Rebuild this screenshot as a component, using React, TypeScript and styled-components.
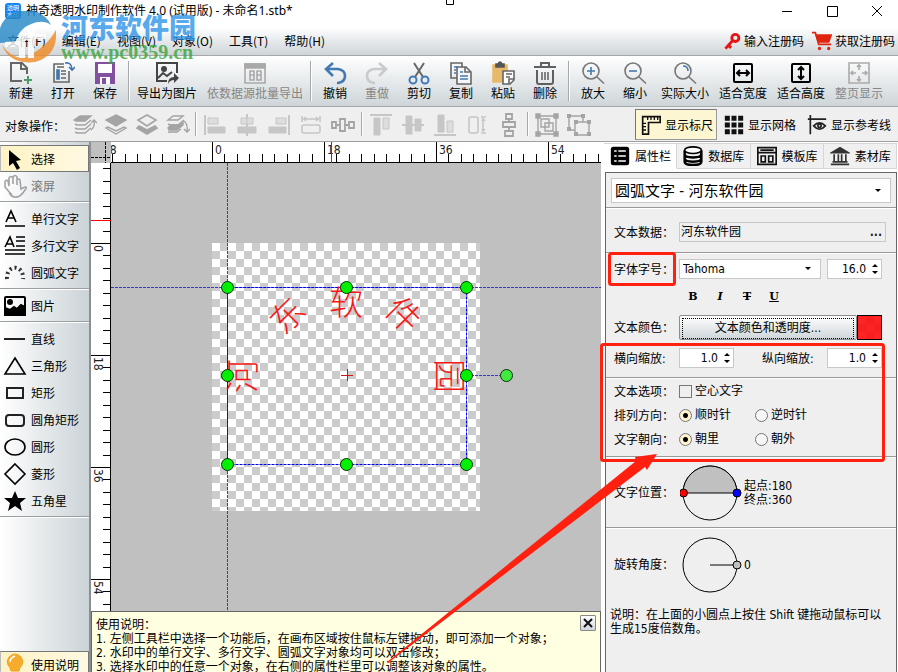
import React, { useLayoutEffect, useRef, useState } from "react";
import styled, { createGlobalStyle, css } from "styled-components";

const UI_FONT = `"Noto Sans CJK SC", "Noto Sans", sans-serif`;
const PANEL_FONT = `"DejaVu Sans Condensed", "Noto Sans CJK SC", sans-serif`;
const BAR_GRADIENT = "linear-gradient(to bottom, #ffffff, #ced5d8)";
const RED = "#ff2010";

const GlobalStyle = createGlobalStyle`
  *, *::before, *::after { box-sizing: border-box; }
  body { margin: 0; font: 12px/14px ${UI_FONT}; color: #000; }
  button, input, select { font: inherit; color: inherit; }
  button { border: 0; background: none; padding: 0; white-space: nowrap; }
  svg { display: block; flex: none; }
`;

const Window = styled.div`
  position: relative;
  display: flex;
  flex-direction: column;
  height: 100vh;
  overflow: hidden;
  background: #fff;
`;

/* ---------- title and menu ---------- */

const TitleBar = styled.header`
  display: flex;
  align-items: center;
  flex: none;
  height: 27px;
  padding: 0 13px 6px 5px;
  gap: 5px;
`;

const AppBadge = styled.span`
  display: grid;
  place-items: center;
  width: 16px;
  height: 16px;
  border-radius: 3px;
  background: #1385f5;
  color: #fff;
  font-size: 6px;
  line-height: 7px;
`;

const Title = styled.h1`
  flex: 1;
  margin: 0;
  font: 400 12px/14px "Noto Sans", "Noto Sans CJK SC", sans-serif;
`;

const WindowButtons = styled.div`
  display: flex;
  gap: 29px;
`;

const MenuBar = styled.nav`
  display: flex;
  align-items: center;
  flex: none;
  gap: 16px;
  height: 29px;
  padding: 0 3px 0 7px;
  border-bottom: 1px solid #a6a9ab;
  background: ${BAR_GRADIENT};
`;

const MenuLink = styled.button`
  display: flex;
  align-items: center;
  gap: 3px;
`;

const MenuRight = styled.div`
  display: flex;
  gap: 8px;
  margin-left: auto;
`;

/* ---------- main toolbar ---------- */

const ToolBar = styled.div`
  display: flex;
  flex: none;
  height: 51px;
  border-bottom: 1px solid #a6a9ab;
  background: ${BAR_GRADIENT};
`;

const ToolButton = styled.button`
  display: flex;
  flex-direction: column;
  align-items: center;
  flex: none;
  min-width: 42px;
  padding: 5px 5px 0;
  line-height: 16px;
  &:disabled { color: #868686; }
`;

const Divider = styled.span`
  flex: none;
  width: 2px;
  margin: 5px 2px;
  border-left: 1px solid #a6a9ab;
  border-right: 1px solid #fff;
`;

/* ---------- object bar ---------- */

const ObjectBar = styled.div`
  display: flex;
  align-items: stretch;
  flex: none;
  height: 35px;
  padding: 0 3px 0 5px;
  border-bottom: 1px solid #a0a0a0;
  background: #efefef;
`;

const BarLabel = styled.span`
  align-self: center;
  width: 64px;
  padding-top: 3px;
`;

const OpButton = styled.button<{ $narrow?: boolean }>`
  display: grid;
  place-items: center;
  flex: none;
  width: ${(p) => (p.$narrow ? 31 : 32)}px;
  padding-top: 2px;
`;

const ViewToggles = styled.div`
  display: flex;
  align-items: center;
  gap: 1px;
  margin-left: auto;
  padding-top: 1px;
`;

const ViewToggle = styled.button<{ $on?: boolean }>`
  display: flex;
  align-items: center;
  gap: 4px;
  height: 31px;
  padding: 0 3px 0 5px;
  border: 1px solid transparent;
  ${(p) =>
    p.$on &&
    css`
      border-color: #777 #999 #999 #777;
      background: #fdf6d2;
    `}
`;

/* ---------- body ---------- */

const Body = styled.main`
  display: flex;
  flex: 1;
  min-height: 0;
`;

const SideBar = styled.aside`
  display: flex;
  flex-direction: column;
  flex: none;
  width: 91px;
  padding-top: 3px;
  border-right: 2px solid #8a8f92;
  background: linear-gradient(to right, #ffffff, #cbd3d7);
`;

const SideButton = styled.button<{ $on?: boolean }>`
  display: flex;
  align-items: center;
  flex: none;
  gap: 4px;
  height: 27px;
  padding-left: 2px;
  border: 1px solid transparent;
  text-align: left;
  &:disabled { color: #777; }
  ${(p) =>
    p.$on &&
    css`
      border-color: #777;
      border-left-color: #bbb;
      background: linear-gradient(to right, #fdf3c4, #fff9e2);
    `}
`;

const SideRule = styled.span`
  flex: none;
  height: 2px;
  margin: 2px 0;
  border-top: 1px solid #9b9fa2;
  border-bottom: 1px solid #fff;
`;

const SideFooter = styled.div`
  display: grid;
  flex: none;
  height: 21px;
  margin-top: auto;
  overflow: hidden;
`;

const Work = styled.section`
  display: flex;
  flex-direction: column;
  flex: 1;
  min-width: 0;
`;

const RulerGrid = styled.div`
  display: grid;
  grid-template: 21px minmax(0, 1fr) / 20px minmax(0, 1fr);
  flex: 1;
  min-height: 0;
`;

const RulerArea = styled.div<{ $tone: string }>`
  overflow: hidden;
  background: ${(p) => p.$tone};
`;

const FillSvg = styled.svg`
  width: 100%;
  height: 100%;
`;

const Tips = styled.section`
  display: flex;
  align-items: flex-start;
  justify-content: space-between;
  flex: 0 0 61px;
  overflow: hidden;
  padding: 3px 4px 0;
  border: 1px solid #666;
  border-bottom: 0;
  background: #ffffe1;
  font-family: ${PANEL_FONT};
`;

const TipText = styled.div`
  padding-top: 3px;
  white-space: nowrap;
`;

const TipHeading = styled.p`
  margin: 0;
`;

const TipList = styled.ol`
  margin: 0;
  padding: 0;
  list-style: none;
`;

const CloseTip = styled.button`
  display: grid;
  place-items: center;
  width: 16px;
  height: 16px;
  border: 1px solid #888;
  border-radius: 1px;
  background: linear-gradient(to bottom, #fff, #d0d7da);
`;

/* ---------- property panel ---------- */

const Panel = styled.aside`
  display: flex;
  flex-direction: column;
  flex: none;
  width: 297px;
  padding: 1px 1px 0 3px;
  background: #fff;
`;

const Tabs = styled.div`
  display: flex;
  margin-bottom: 3px;
  flex: none;
  height: 26px;
`;

const Tab = styled.button<{ $on?: boolean }>`
  display: flex;
  align-items: center;
  flex: 1 1 0;
  gap: 5px;
  padding: 0 4px 0 6px;
  border: 1px solid #d6d6d6;
  border-left: 0;
  background: ${(p) => (p.$on ? "#fff" : "#f0f0f0")};
  ${(p) => p.$on && "border-bottom-color: #fff;"}
`;

const PanelBox = styled.div`
  flex: 1;
  margin-left: 1px;
  border: 1px solid #666;
  border-bottom: 0;
  background: #efefef;
  font-family: ${PANEL_FONT};
`;

const Section = styled.section<{ $pad: string }>`
  padding: ${(p) => p.$pad};
  border-bottom: 1px solid #999;
  box-shadow: 0 1px 0 #fff;
  & + & { padding-top: 1px; }
`;

const Row = styled.div<{ $h: number; $top?: number; $gap?: number }>`
  display: flex;
  align-items: center;
  gap: ${(p) => p.$gap ?? 0}px;
  height: ${(p) => p.$h}px;
  margin-top: ${(p) => p.$top ?? 0}px;
`;

const AngleRow = styled(Row)`
  padding: 0 8px;
`;

const FontFields = styled.div`
  display: flex;
  flex: 1;
  gap: 6px;
`;

const ScaleFields = styled.div`
  display: flex;
  align-items: center;
  justify-content: space-between;
  flex: 1;
`;

const FieldLabel = styled.label`
  flex: none;
  width: 65px;
  padding-top: 1px;
`;

const FieldName = styled.span`
  flex: none;
  width: 65px;
  padding-top: 1px;
`;

const SelectWrap = styled.div<{ $big?: boolean }>`
  display: grid;
  grid-template-columns: 1fr 16px;
  align-items: center;
  flex: 1;
  height: ${(p) => (p.$big ? 25 : 20)}px;
  border: 1px solid #c8c8c8;
  background: #fff;
  font-size: ${(p) => (p.$big ? 15 : 12)}px;
`;

const Select = styled.select`
  grid-area: 1 / 1 / 2 / 3;
  width: 100%;
  height: 100%;
  padding: 0 16px 0 3px;
  border: 0;
  background: transparent;
  appearance: none;
  outline: 0;
`;

const SelectArrow = styled.svg`
  grid-area: 1 / 2;
  pointer-events: none;
`;

const DataBox = styled.div`
  display: flex;
  flex: 1;
  height: 20px;
  margin-right: 2px;
  border: 1px solid #c8c8c8;
`;

const PlainInput = styled.input<{ $right?: boolean }>`
  flex: 1;
  min-width: 0;
  width: 100%;
  padding: 0 ${(p) => (p.$right ? 4 : 1)}px;
  border: 0;
  outline: 0;
  background: transparent;
  text-align: ${(p) => (p.$right ? "right" : "left")};
`;

const MoreButton = styled.button`
  padding: 0 3px;
  font-weight: 700;
  color: #223;
`;

const Spin = styled.div`
  display: flex;
  align-items: center;
  flex: none;
  width: 55px;
  height: 20px;
  padding-right: 2px;
  border: 1px solid #c8c8c8;
  background: #fff;
`;

const StyleRow = styled.div`
  display: flex;
  align-items: center;
  gap: 15px;
  height: 36px;
  padding-left: 73px;
`;

const StyleButton = styled.button`
  width: 12px;
  font: 900 11px/14px "DejaVu Serif", serif;
`;

const ColorButton = styled.button`
  flex: 1;
  height: 25px;
  padding: 2px;
  border: 1px solid #8b8b8b;
  border-radius: 2px;
  background: linear-gradient(to bottom, #fff, #cfd6d9);
`;

const Focus = styled.span`
  display: block;
  border: 1px dotted #000;
  line-height: 19px;
`;

const Swatch = styled.span`
  flex: none;
  width: 25px;
  height: 25px;
  border: 1px solid #000;
  background: repeating-conic-gradient(#f72020 0 25%, #ff2424 0 50%) 0 0 / 16px 16px;
`;

const Choice = styled.label`
  display: flex;
  align-items: center;
  gap: 3px;
  width: 76px;
`;

const Check = styled.input`
  flex: none;
  appearance: none;
  width: 13px;
  height: 13px;
  margin: 0;
  border: 1px solid #777;
`;

const Radio = styled(Check)`
  border-radius: 50%;
  background: #f6f6f6;
  &:checked {
    background: radial-gradient(circle, #000 0 2px, #fff3cf 3px);
  }
`;

const Angles = styled.div`
  line-height: 14px;
  white-space: pre-line;
`;

const Note = styled.p`
  margin: 0;
  padding: 7px 8px 0 4px;
`;

/* ---------- overlays ---------- */

const Mark = styled.div`
  position: absolute;
  top: 11px;
  left: 0;
  display: flex;
  align-items: center;
  gap: 5px;
  opacity: 0.8;
  pointer-events: none;
`;

const MarkText = styled.div`
  display: flex;
  flex-direction: column;
  color: #2f95e8;
  font-size: 27px;
  font-weight: 900;
  line-height: 28px;
`;

const MarkUrl = styled.span`
  color: #3aa63c;
  font: 700 20px/22px "Liberation Serif", serif;
`;

const Annotations = styled.svg`
  position: absolute;
  inset: 0;
  width: 100%;
  height: 100%;
  pointer-events: none;
`;

/* ---------- icons ---------- */

type IconProps = { w?: number; h?: number; box?: string; color?: string; fill?: string; sw?: number; children: React.ReactNode };

const Icon = ({ w = 24, h = 24, box = "0 0 24 24", color = "#666", fill = "none", sw = 2, children }: IconProps) => (
  <svg width={w} height={h} viewBox={box} fill={fill} stroke={color} strokeWidth={sw} aria-hidden="true">
    {children}
  </svg>
);

const Lens = ({ children }: { children: React.ReactNode }) => (
  <Icon color="#777" sw={1.6}>
    <circle cx="10" cy="10" r="8" />
    <path d="M16 16l7 6.500" />
    {children}
  </Icon>
);

const tools: Array<{ label: string; off?: boolean; icon: React.ReactNode } | null> = [
  { label: "新建", icon: <Icon><path d="M13 20H2V2h11l5 5v6M12 2v6h6" /><path d="M19 15v8M15 19h8" stroke="#4f9a6a" /></Icon> },
  { label: "打开", icon: <Icon sw={1.6}><path d="M13 3H3v18h15V10" /><path d="M6 6h7M10 10h5M10 13h5M10 17h5" /><path d="M6 9h2v9H6z" fill="#3f76b0" stroke="#3f76b0" /><path d="M14 2q7-1 7 7M18 6l3 3 3-3" stroke="#3f76b0" /></Icon> },
  { label: "保存", icon: <Icon color="none"><path d="M2 1h20v22H2z" fill="#8350a0" /><path d="M5 3h14v9H5zM7 16h10v7H7z" fill="#fff" /><path d="M9 17h4v6H9z" fill="#8350a0" /></Icon> },
  null,
  { label: "导出为图片", icon: <Icon color="#444"><path d="M12 20H2V2h20v10" /><circle cx="9" cy="8" r="2" fill="#444" /><path d="M3 17l5-5 4 3 5-4" /><path d="M13 23q0-7 6-7v-4l5 5-5 5v-3q-4 0-6 4z" fill="#444" stroke="none" /></Icon> },
  { label: "依数据源批量导出", off: true, icon: <Icon color="#a9a9a9" sw={1.6}><path d="M2 3h20v19H2z" /><path d="M2 3h20v4H2z" fill="#a9a9a9" /><path d="M7 10h4v4H7zM7 14h4v5H7zM14 10h4v4h-4zM14 14h4v5h-4z" /></Icon> },
  null,
  { label: "撤销", icon: <Icon color="#4479b5" sw={2.6}><path d="M10 2L3 8l7 7M3 8h12q7 1 7 7t-7 7h-1" /></Icon> },
  { label: "重做", off: true, icon: <Icon color="#c8cacb" sw={2.6}><path d="M14 2l7 6-7 7M21 8H9q-7 1-7 7t7 7h1" /></Icon> },
  { label: "剪切", icon: <Icon><path d="M7 2l9 14M17 2L8 16" /><circle cx="6" cy="19" r="3.500" stroke="#4479b5" /><circle cx="18" cy="19" r="3.500" stroke="#4479b5" /></Icon> },
  { label: "复制", icon: <Icon sw={1.6}><path d="M8 17H2V2h11v4" /><path d="M8 6h9l5 5v12H8z" fill="#f4f6f7" /><path d="M16 6v5h5" /><path d="M5 6h4M5 9h2M5 12h2M11 11h3M11 15h8M11 18h8" stroke="#4479b5" /></Icon> },
  { label: "粘贴", icon: <Icon sw={1.6}><path d="M2 4h14v17H2z" fill="#e7ba69" stroke="#e7ba69" /><path d="M5 3h2q2-4 4 0h2v3H5z" fill="#555" stroke="#555" /><path d="M12 10h11v9l-4 4h-7z" fill="#fff" /><path d="M15 13h6M15 16h4M23 18h-5v5" /></Icon> },
  { label: "删除", icon: <Icon color="#606060"><path d="M1 6h22M8 5V2h8v3M4 9v12q0 2 2 2h12q2 0 2-2V9" /><path d="M9 11v8M12 11v8M15 11v8" strokeWidth="1.500" /></Icon> },
  null,
  { label: "放大", icon: <Lens><path d="M6 10h8M10 6v8" stroke="#4479b5" /></Lens> },
  { label: "缩小", icon: <Lens><path d="M6 10h8" stroke="#4479b5" /></Lens> },
  { label: "实际大小", icon: <Lens><path d="M10 5q5 0 5 5" stroke="#4479b5" /></Lens> },
  { label: "适合宽度", icon: <Icon color="#000"><rect x="3" y="3" width="18" height="18" rx="1" /><path d="M6 12h12M9 9l-3 3 3 3M15 9l3 3-3 3" /></Icon> },
  { label: "适合高度", icon: <Icon color="#000"><rect x="3" y="3" width="18" height="18" rx="1" /><path d="M12 6v12M9 9l3-3 3 3M9 15l3 3 3-3" /></Icon> },
  { label: "整页显示", off: true, icon: <Icon color="#aaa" sw={1.6}><path d="M2 2h20v20H2z" /><path d="M12 4v5M12 15v5M4 12h5M15 12h5M10 6l2-2 2 2M10 18l2 2 2-2M6 10l-2 2 2 2M18 10l2 2-2 2" /></Icon> },
];

const G = "#c6c6c6";
const D = "#a4a4a4";
const opGroups: Array<Array<[string, React.ReactNode]>> = [
  [
    ["置顶", <Icon color={D} sw={1.4}><path d="M1 7l6-4h11l-6 5H3z" fill={D} /><path d="M2 11l2 1h8l6-5M2 15l2 1h8l6-5M2 19l2 1h8l6-5" /><path d="M18 17q4-3 3-9M18 10l3-3 3 3" /></Icon>],
    ["上移一层", <Icon color={D} sw={1.4}><path d="M12 2l10 5-10 6L2 7z" fill={D} /><path d="M4 14l-2 1 10 6 10-6-2-1-8 4z" /></Icon>],
    ["下移一层", <Icon color={D} sw={1.6}><path d="M12 2l9 5-9 6-9-6z" /><path d="M4 13l-2 2 10 6 10-6-2-2-8 4z" fill={D} /></Icon>],
    ["置底", <Icon color={D} sw={1.4}><path d="M2 7l5-4h10l-5 4zM2 11l2 1h8l6-5" /><path d="M2 15l3-3h8l4-3v3l-6 5H3z" fill={D} /><path d="M2 19h9l4-3M18 8q4 3 3 11M18 16l3 3 3-3" /></Icon>],
  ],
  [
    ["左对齐", <Icon color={G} fill={G} sw={1}><path d="M2 2v20" strokeWidth="2" /><path d="M5 5h10v6H5z" fill="#ddd" /><path d="M5 14h17v6H5z" /></Icon>],
    ["水平居中", <Icon color={G} fill={G} sw={1}><path d="M12 1v22" strokeWidth="2" /><path d="M6 5h12v6H6z" fill="#ddd" /><path d="M3 14h18v6H3zM12 1v22" /></Icon>],
    ["右对齐", <Icon color={G} fill={G} sw={1}><path d="M22 2v20" strokeWidth="2" /><path d="M9 5h10v6H9z" fill="#ddd" /><path d="M2 14h17v6H2z" /></Icon>],
    ["等宽", <Icon color={G} sw={1.6}><path d="M3 3v6M21 3v6M4 6h16M7 4L5 6l2 2M17 4l2 2-2 2" /><rect x="3" y="12" width="18" height="8" rx="2" /></Icon>],
    ["水平等距", <Icon color={D} sw={1.8} w={26} box="0 0 26 24"><path d="M2 9h4v6H2zM10 6h5v12h-5zM19 9h5v6h-5zM6 12h4M15 12h4" /></Icon>],
  ],
  [
    ["顶对齐", <Icon color={G} fill={G} sw={1}><path d="M1 2h22" strokeWidth="2" /><path d="M5 5h6v17H5z" /><path d="M14 5h6v11h-6z" fill="#ddd" /></Icon>],
    ["垂直居中", <Icon color={G} fill={G} sw={1}><path d="M1 12h22" strokeWidth="2" /><path d="M5 3h6v18H5z" /><path d="M14 6h6v12h-6z" /></Icon>],
    ["底对齐", <Icon color={G} fill={G} sw={1}><path d="M1 22h22" strokeWidth="2" /><path d="M5 2h6v17H5z" /><path d="M14 8h6v11h-6z" fill="#ddd" /></Icon>],
    ["等高", <Icon color={G} sw={1.6}><rect x="4" y="4" width="9" height="16" rx="2" /><path d="M16 4h5M16 20h5M18 5v14M17 8l1-2 2 2M17 16l1 2 2-2" /></Icon>],
    ["垂直等距", <Icon color={D} sw={1.8}><path d="M9 1h6v5H9zM6 9h12v5H6zM8 18h8v5H8zM12 6v3M12 14v4" /></Icon>],
  ],
  [
    ["组合", <Icon color={D} sw={1.4}><path d="M3 3h18v18H3zM6 6h8v8H6zM10 10h8v8h-8z" /><path d="M1 1h4v4H1zM19 1h4v4h-4zM1 19h4v4H1zM19 19h4v4h-4z" fill={D} /></Icon>],
    ["取消组合", <Icon color={D} sw={1.4}><path d="M2 3h14v6M2 3v14h6M8 9h14v13H8z" /><path d="M0 1h4v4H0zM14 1h4v4h-4zM0 14h4v4H0zM7 7h4v4H7zM20 7h4v4h-4zM7 19h4v4H7zM20 19h4v4h-4z" fill={D} stroke="none" /></Icon>],
  ],
];

const sideTools: Array<{ label: string; on?: boolean; off?: boolean; icon: React.ReactNode } | null> = [
  { label: "选择", on: true, icon: <Icon color="none" fill="#000"><path d="M6 3v16l4-3 4 7 3-2-4-7 5-1z" /></Icon> },
  { label: "滚屏", off: true, icon: <Icon color="#a3a3a3" sw={1.6}><path d="M8 20L2 13V8q1-3 3-1l1 5V4q2-3 4 0v6-7q2-3 4 0v8-5q2-2 3 0l1 9 4-2q3 0 0 3-5 8-10 7-3 0-5-3z" /></Icon> },
  null,
  { label: "单行文字", icon: <Icon color="#000" sw={1.6}><path d="M3 15L8 4l5 11M5 11h6M2 19h20" /></Icon> },
  { label: "多行文字", icon: <Icon color="#000" sw={1.6}><path d="M2 13L7 3l4 10M4 10h6M13 3h9M13 7h9M13 12h9M2 16h20M2 20h20" /></Icon> },
  { label: "圆弧文字", icon: <Icon color="#333" sw={4}><path d="M4 18C3 3 21 3 20 18" strokeDasharray="2 3" /></Icon> },
  null,
  { label: "图片", icon: <Icon color="#000"><rect x="2" y="3" width="20" height="18" rx="1" /><circle cx="7" cy="8" r="2" fill="#000" /><path d="M2 14l5 2 4-3 3 2 4-4 4 2v8H2z" fill="#000" /></Icon> },
  null,
  { label: "直线", icon: <Icon color="#222"><path d="M1 12h21" /></Icon> },
  { label: "三角形", icon: <Icon color="#000" sw={1.6}><path d="M12 4l10 16H2z" /></Icon> },
  { label: "矩形", icon: <Icon color="#222"><path d="M4 7h16v10H4z" /></Icon> },
  { label: "圆角矩形", icon: <Icon color="#222"><rect x="3" y="7" width="18" height="11" rx="3" /></Icon> },
  { label: "圆形", icon: <Icon color="#000" sw={1.6}><ellipse cx="12" cy="12" rx="10" ry="8" /></Icon> },
  { label: "菱形", icon: <Icon color="#000" sw={1.6}><path d="M12 2l10 10-10 10L2 12z" /></Icon> },
  { label: "五角星", icon: <Icon color="none" fill="#000"><path d="M12 2l3 7h8l-6 5 2 8-7-5-7 5 2-8-6-5h8z" /></Icon> },
  null,
];

const tabs: Array<[string, React.ReactNode]> = [
  ["属性栏", <Icon w={20} h={20} color="#fff" sw={2}><rect x="1" y="1" width="22" height="22" rx="3" fill="#000" stroke="none" /><path d="M5 6h3M10 6h9M5 12h3M10 12h9M5 18h3M10 18h9" /></Icon>],
  ["数据库", <Icon w={20} h={20} color="#000"><path d="M2 5v14c0 5 20 5 20 0V5M2 10c0 5 20 5 20 0M2 15c0 5 20 5 20 0" strokeWidth="3" /><ellipse cx="12" cy="5" rx="10" ry="4" fill="#fff" /></Icon>],
  ["模板库", <Icon w={20} h={20} color="#111"><path d="M1 2h22v20H1z" /><path d="M1 8h22M4 5h16" /><path d="M5 12h5v7H5zM14 12h5v7h-5z" /></Icon>],
  ["素材库", <Icon w={20} h={20} color="#333"><path d="M2 8l10-6 10 6z" fill="#333" /><path d="M1 22h22M3 19h18M5 10v9M10 10v9M14 10v9M19 10v9" /></Icon>],
];

/* ---------- rulers and stage ---------- */

const MAJOR = 112;
const DIVISIONS = 9;

type RulerProps = { vertical?: boolean; origin: number; cursor: number };

const Ruler = ({ vertical, origin, cursor }: RulerProps) => {
  const ref = useRef<SVGSVGElement>(null);
  const [length, setLength] = useState(0);

  useLayoutEffect(() => {
    const node = ref.current;
    if (!node) return;
    const measure = () => {
      const box = node.getBoundingClientRect();
      setLength(vertical ? box.height : box.width);
    };
    measure();
    const observer = new ResizeObserver(measure);
    observer.observe(node);
    return () => observer.disconnect();
  }, [vertical]);

  const end = vertical ? 20 : 21;
  const line = (at: number, from: number) => (vertical ? `M${from} ${at}H${end}` : `M${at} ${from}V${end}`);
  const step = MAJOR / DIVISIONS;
  const first = Math.ceil(-origin / step);
  const last = Math.floor((length - origin) / step);
  const ticks = Array.from({ length: Math.max(0, last - first + 1) }, (_, i) => first + i);
  const labels: number[] = [];
  for (let n = Math.floor(-origin / MAJOR); origin + n * MAJOR + 14 < length; n++) {
    if (origin + n * MAJOR + 12 > 0) labels.push(n);
  }

  return (
    <FillSvg ref={ref} aria-hidden="true">
      <path d={ticks.map((n) => line(Math.round(origin + n * step) + 0.5, n % DIVISIONS ? 12 : 0)).join("")} stroke="#000" />
      <path d={vertical ? `M19.5 0V${length}` : `M0 20.5H${length}`} stroke="#000" />
      {labels.map((n) => (
        <text
          key={n}
          fontSize="12"
          fontFamily="DejaVu Sans Condensed"
          fill="#222"
          transform={vertical ? `translate(3 ${origin + n * MAJOR + 2}) rotate(90)` : `translate(${origin + n * MAJOR + 3} 12)`}
        >
          {Math.abs(n * 18)}
        </text>
      ))}
      <path d={line(cursor, 0)} stroke="#f00" />
    </FillSvg>
  );
};

const glyphs: Array<[string, number, number, number]> = [
  ["河", 131, 213, -90],
  ["东", 176, 152, -45],
  ["软", 235, 139, 0],
  ["件", 293, 151, 45],
  ["园", 339, 213, 90],
];

const handles = [116, 235, 355].flatMap((x) => [124, 212, 301].map((y) => [x, y])).filter(([x, y]) => x !== 235 || y !== 212);

const Stage = () => (
  <FillSvg role="img" aria-label="画布">
    <defs>
      <pattern id="checks" x="101" y="80" width="16" height="16" patternUnits="userSpaceOnUse">
        <path d="M0 0h16v16H0z" fill="#fff" />
        <path d="M8 0h8v8H8zM0 8h8v8H0z" fill="#ccc" />
      </pattern>
    </defs>
    <rect x="101" y="80" width="268" height="268" fill="url(#checks)" />
    <path d="M0 124.500H4000M116.500 0V4000M356 212.500H390" stroke="#3a3ac8" strokeDasharray="3 1" />
    <rect x="116.500" y="124.500" width="239" height="177" fill="none" stroke="#0000f0" strokeDasharray="3 1" />
    <g fill="#f81818" fontFamily="Noto Sans CJK SC" fontWeight="300" fontSize="34" textAnchor="middle">
      {glyphs.map(([ch, x, y, a]) => (
        <text key={ch} transform={`translate(${x} ${y}) rotate(${a})`} y="13">
          {ch}
        </text>
      ))}
    </g>
    <path d="M230 212.500h12M236.500 206v12" stroke="#c81818" />
    <g fill="#00f000" stroke="#063006">
      {handles.map(([x, y]) => (
        <circle key={`${x}-${y}`} cx={x + 0.5} cy={y + 0.5} r="6" />
      ))}
      <circle cx="395.500" cy="212.500" r="6" fill="#40e840" />
    </g>
  </FillSvg>
);

const SpinBox = ({ value, label, id }: { value: string; label: string; id?: string }) => (
  <Spin>
    <PlainInput id={id} $right defaultValue={value} aria-label={label} />
    <svg width="9" height="12" viewBox="0 0 9 12" aria-hidden="true">
      <path d="M2 4l3-3 3 3zM2 8l3 3 3-3z" />
    </svg>
  </Spin>
);

const Arrow = () => (
  <SelectArrow width="9" height="6" viewBox="0 0 9 6" aria-hidden="true">
    <path d="M1 1h6L4 4z" />
  </SelectArrow>
);

export default function App() {
  return (
    <Window>
      <GlobalStyle />
      <TitleBar>
        <AppBadge>
          <span>透明<br />水印</span>
        </AppBadge>
        <Title>神奇透明水印制作软件 4.0 (试用版) - 未命名1.stb*</Title>
        <WindowButtons>
          {[["最小化", "M3 8.500h10"], ["最大化", "M3.500 3.500h10v10h-10z"], ["关闭", "M3 3l10 10M13 3L3 13"]].map(([name, d]) => (
            <button key={name} aria-label={name}>
              <Icon w={16} h={16} box="0 0 16 16" color="#000" sw={1}><path d={d} /></Icon>
            </button>
          ))}
        </WindowButtons>
      </TitleBar>

      <MenuBar>
        {["文件(F)", "编辑(E)", "视图(V)", "对象(O)", "工具(T)", "帮助(H)"].map((m) => (
          <MenuLink key={m}>{m}</MenuLink>
        ))}
        <MenuRight>
          <MenuLink>
            <Icon w={17} h={17} color="#e81414" sw={4}><circle cx="16" cy="7" r="5" /><path d="M12 11L2 22M6 17l4 4" /></Icon>
            输入注册码
          </MenuLink>
          <MenuLink>
            <Icon w={20} h={20} color="#e02410" sw={2}><path d="M0 2h4l4 14h15" /><path d="M5 5h18l-3 8H8z" fill="#e02410" /><circle cx="9" cy="21" r="1" fill="#e02410" /><circle cx="20" cy="21" r="1" fill="#e02410" /></Icon>
            获取注册码
          </MenuLink>
        </MenuRight>
      </MenuBar>

      <ToolBar role="toolbar">
        {tools.map((t, i) =>
          t ? (
            <ToolButton key={t.label} disabled={t.off}>
              {t.icon}
              {t.label}
            </ToolButton>
          ) : (
            <Divider key={i} />
          )
        )}
      </ToolBar>

      <ObjectBar role="toolbar">
        <BarLabel>对象操作：</BarLabel>
        {opGroups.map((group, g) => (
          <React.Fragment key={g}>
            {g > 0 && <Divider />}
            {group.map(([name, icon]) => (
              <OpButton key={name} disabled aria-label={name} $narrow={g === 0}>
                {icon}
              </OpButton>
            ))}
          </React.Fragment>
        ))}
        <ViewToggles>
          <ViewToggle $on aria-pressed="true">
            <Icon w={20} h={20} color="#111"><path d="M2 2h21v7H9v14H2z" /><path d="M8 2v4M12 2v4M16 2v4M20 2v4M2 10h4M2 14h4M2 18h4" strokeWidth="1.600" /></Icon>
            显示标尺
          </ViewToggle>
          <ViewToggle>
            <Icon w={20} h={20} color="none" fill="#111"><path d="M1 1h6v6H1zM9 1h6v6H9zM17 1h6v6h-6zM1 9h6v6H1zM9 9h6v6H9zM17 9h6v6h-6zM1 17h6v6H1zM9 17h6v6H9zM17 17h6v6h-6z" /></Icon>
            显示网格
          </ViewToggle>
          <ViewToggle>
            <Icon w={20} h={20} color="#222"><path d="M1 5h22M4 0v23M8 13q7-7 14 0-7 8-14 0z" /><circle cx="15" cy="13" r="2" /></Icon>
            显示参考线
          </ViewToggle>
        </ViewToggles>
      </ObjectBar>

      <Body>
        <SideBar>
          {sideTools.map((t, i) =>
            t ? (
              <SideButton key={t.label} $on={t.on} disabled={t.off}>
                {t.icon}
                {t.label}
              </SideButton>
            ) : (
              <SideRule key={i} />
            )
          )}
          <SideFooter>
            <SideButton $on>
              <Icon color="#f2a11c" fill="#f6ad2d" sw={1}><path d="M8 18q0-3-3-6-2-4 1-8 3-3 6-3t6 3q3 4 1 8-3 3-3 6z" /><path d="M8 20h8v4H8z" fill="#999" stroke="none" /><path d="M7 9q0-4 5-6" fill="none" stroke="#fff" strokeWidth="1.500" /></Icon>
              使用说明
            </SideButton>
          </SideFooter>
        </SideBar>

        <Work>
          <RulerGrid>
            <RulerArea $tone="#c0c0c0">
              <FillSvg aria-hidden="true"><path d="M0 15.500H20M14.500 0V21" stroke="#000" strokeDasharray="3 1" /></FillSvg>
            </RulerArea>
            <RulerArea $tone="#fff"><Ruler origin={101} cursor={220.5} /></RulerArea>
            <RulerArea $tone="#fff"><Ruler vertical origin={80} cursor={57.5} /></RulerArea>
            <RulerArea $tone="#c0c0c0"><Stage /></RulerArea>
          </RulerGrid>
          <Tips>
            <TipText>
              <TipHeading>使用说明：</TipHeading>
              <TipList>
                <li>1. 左侧工具栏中选择一个功能后，在画布区域按住鼠标左键拖动，即可添加一个对象；</li>
                <li>2. 水印中的单行文字、多行文字、圆弧文字对象均可以双击修改；</li>
                <li>3. 选择水印中的任意一个对象，在右侧的属性栏里可以调整该对象的属性。</li>
              </TipList>
            </TipText>
            <CloseTip aria-label="关闭说明">
              <Icon w={12} h={12} box="0 0 12 12" color="#111" sw={2}><path d="M2 2l8 8M10 2l-8 8" /></Icon>
            </CloseTip>
          </Tips>
        </Work>

        <Panel>
          <Tabs role="tablist">
            {tabs.map(([name, icon], i) => (
              <Tab key={name} role="tab" aria-selected={i === 0} $on={i === 0}>
                {icon}
                {name}
              </Tab>
            ))}
          </Tabs>
          <PanelBox>
            <Section $pad="5px 5px 4px">
              <SelectWrap $big>
                <Select aria-label="对象">
                  <option>圆弧文字 - 河东软件园</option>
                </Select>
                <Arrow />
              </SelectWrap>
            </Section>

            <Section $pad="0 8px 10px">
              <Row $h={20} $top={13}>
                <FieldLabel htmlFor="data">文本数据：</FieldLabel>
                <DataBox>
                  <PlainInput id="data" defaultValue="河东软件园" />
                  <MoreButton aria-label="编辑文本数据">...</MoreButton>
                </DataBox>
              </Row>
            </Section>

            <Section $pad="0 14px 9px 8px">
              <Row $h={20} $top={5}>
                <FieldLabel htmlFor="font">字体字号：</FieldLabel>
                <FontFields>
                  <SelectWrap>
                    <Select id="font">
                      <option>Tahoma</option>
                    </Select>
                    <Arrow />
                  </SelectWrap>
                  <SpinBox value="16.0" label="字号" />
                </FontFields>
              </Row>
              <StyleRow>
                <StyleButton aria-label="粗体">B</StyleButton>
                <StyleButton aria-label="斜体"><i>I</i></StyleButton>
                <StyleButton aria-label="删除线"><s>T</s></StyleButton>
                <StyleButton aria-label="下划线"><u>U</u></StyleButton>
              </StyleRow>
              <Row $h={25}>
                <FieldName>文本颜色：</FieldName>
                <ColorButton><Focus>文本颜色和透明度...</Focus></ColorButton>
                <Swatch />
              </Row>
              <Row $h={20} $top={8}>
                <FieldLabel htmlFor="sx">横向缩放:</FieldLabel>
                <SpinBox id="sx" value="1.0" label="横向缩放" />
                <ScaleFields>
                  <span />
                  <Row $h={20}>
                    <FieldLabel htmlFor="sy">纵向缩放:</FieldLabel>
                    <SpinBox id="sy" value="1.0" label="纵向缩放" />
                  </Row>
                </ScaleFields>
              </Row>
            </Section>

            <Section $pad="0 8px 5px">
              <Row $h={24}>
                <FieldName>文本选项：</FieldName>
                <Choice><Check type="checkbox" />空心文字</Choice>
              </Row>
              <Row $h={24}>
                <FieldName>排列方向：</FieldName>
                <Choice><Radio type="radio" name="dir" defaultChecked />顺时针</Choice>
                <Choice><Radio type="radio" name="dir" />逆时针</Choice>
              </Row>
              <Row $h={24}>
                <FieldName>文字朝向：</FieldName>
                <Choice><Radio type="radio" name="face" defaultChecked />朝里</Choice>
                <Choice><Radio type="radio" name="face" />朝外</Choice>
              </Row>
            </Section>

            <Section $pad="0 8px">
              <Row $h={69} $gap={1}>
                <FieldName>文字位置：</FieldName>
                <svg width="63" height="60" viewBox="0 0 63 60" fill="none" stroke="#000" aria-hidden="true">
                  <circle cx="30" cy="30" r="27" />
                  <path d="M3 30a27 27 0 0 1 54 0z" fill="#c0c0c0" />
                  <circle cx="3.500" cy="30" r="4" fill="#f00" />
                  <circle cx="57" cy="30" r="4" fill="#00f" />
                </svg>
                <Angles>{"起点:180\n终点:360"}</Angles>
              </Row>
            </Section>

            <AngleRow $h={73} $gap={1}>
              <FieldName>旋转角度：</FieldName>
              <svg width="63" height="60" viewBox="0 0 63 60" fill="none" stroke="#000" aria-hidden="true">
                <circle cx="30" cy="30" r="27" />
                <path d="M30 30h24" />
                <circle cx="57" cy="30" r="4" fill="#c0c0c0" />
              </svg>
              <Angles>0</Angles>
            </AngleRow>
            <Note>说明：在上面的小圆点上按住 Shift 键拖动鼠标可以生成15度倍数角。</Note>
          </PanelBox>
        </Panel>
      </Body>

      <Mark>
        <svg width="56" height="54" viewBox="0 0 56 54" aria-hidden="true">
          <path d="M0 30A27 25 0 0 1 51 14Q43 8 31 13 20 17 15 31L0 32z" fill="#2387c8" />
          <path d="M2 34Q10 46 22 47 44 40 56 19 58 45 35 51 10 54 2 34z" fill="#f08a24" />
          <path d="M5 31l14-1v-8h8v-6h8v7h11v5H34v19h-6V29h-3v18h-6V36H5z" fill="#fff" />
        </svg>
        <MarkText>
          河东软件园
          <MarkUrl>www.pc0359.cn</MarkUrl>
        </MarkText>
      </Mark>

      <Annotations aria-hidden="true">
        <path d="M446.500 0v4.500h7V0" fill="none" stroke="#000" />
        <rect x="609.500" y="253.500" width="65" height="31" rx="2" fill="none" stroke={RED} strokeWidth="3" />
        <rect x="601.500" y="344.500" width="282" height="116" rx="2" fill="none" stroke={RED} strokeWidth="3" />
        <path d="M387 662L636 461 635 457 657 454 647 470 645 467 388 663z" fill={RED} />
      </Annotations>
    </Window>
  );
}
